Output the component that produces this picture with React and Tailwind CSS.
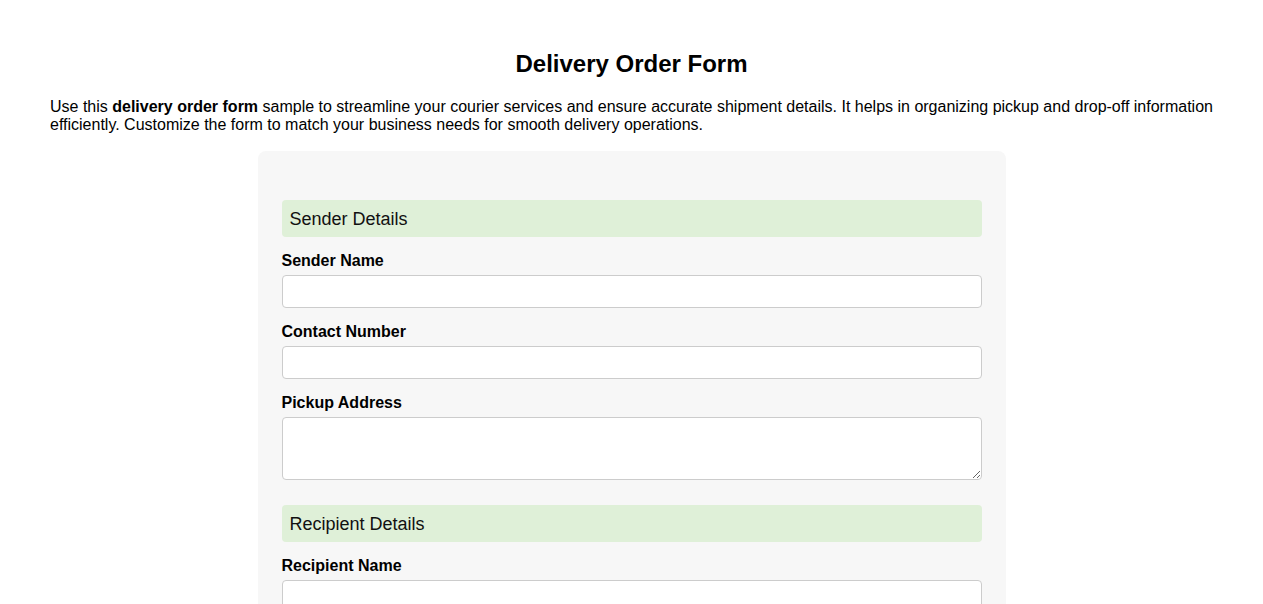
const sections = [
  {
    title: 'Sender Details',
    fields: [
      { label: 'Sender Name', type: 'input' },
      { label: 'Contact Number', type: 'input' },
      { label: 'Pickup Address', type: 'textarea' },
    ],
  },
  {
    title: 'Recipient Details',
    fields: [
      { label: 'Recipient Name', type: 'input' },
      { label: 'Contact Number', type: 'input' },
      { label: 'Delivery Address', type: 'textarea' },
    ],
  },
  {
    title: 'Package Details',
    fields: [
      { label: 'Package Description', type: 'textarea' },
      { label: 'Weight (kg)', type: 'input' },
      { label: 'Preferred Delivery Date', type: 'input' },
    ],
  },
]

function Field({ label, type }) {
  return (
    <div className="flex flex-col">
      <label className="mt-[15px] text-[16px] leading-[18px] font-bold">{label}</label>
      {type === 'textarea' ? (
        <textarea className="mt-[5px] h-[63px] w-full border border-[#ccc] rounded-[4px] bg-white px-2 py-1 text-[16px] outline-none resize-y" />
      ) : (
        <input type="text" className="mt-[5px] h-[33px] w-full border border-[#ccc] rounded-[4px] bg-white px-2 text-[16px] outline-none" />
      )}
    </div>
  )
}

export default function App() {
  return (
    <div className="min-h-screen bg-white text-black px-[50px] pt-[50px] pb-10 font-['Liberation_Sans',Arial,sans-serif]">
      <h1 className="text-center text-[24px] leading-[28px] font-bold">Delivery Order Form</h1>

      <p className="mt-[20px] text-[16px] leading-[18px]">
        Use this <b>delivery order form</b> sample to streamline your courier services and ensure accurate shipment details. It helps in organizing pickup and drop-off information efficiently. Customize the form to match your business needs for smooth delivery operations.
      </p>

      <form className="mx-auto mt-[17px] w-[748px] bg-[#f7f7f7] rounded-[8px] p-6">
        {sections.map(s => (
          <div key={s.title}>
            <div className="mt-[25px] bg-[#dff0d8] rounded-[4px] px-2 pt-[9px] pb-[7px] text-[18px] leading-[21px] text-[#111]">
              {s.title}
            </div>
            {s.fields.map(f => (
              <Field key={f.label} {...f} />
            ))}
          </div>
        ))}
        <button type="button" className="mt-6 bg-[#4caf50] text-white rounded-[4px] px-5 py-2 text-[16px]">
          Submit Order
        </button>
      </form>
    </div>
  )
}
